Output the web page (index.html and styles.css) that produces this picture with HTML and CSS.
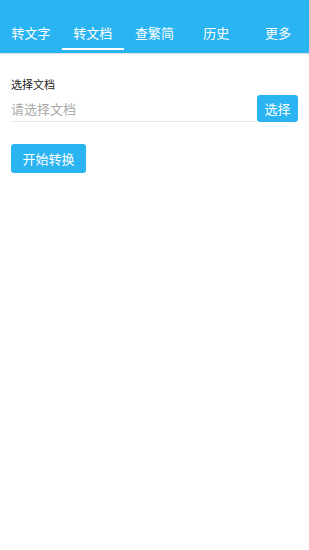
FILE: index.html
```html
<!DOCTYPE html>
<html lang="zh">
<head>
    <meta charset="UTF-8">
    <meta name="viewport" content="width=device-width, initial-scale=1.0">
    <title>转文档</title>
    <link rel="stylesheet" href="styles.css">
</head>
<body>
    <div class="tabs">
        <div class="tab">转文字</div>
        <div class="tab active">转文档</div>
        <div class="tab">查繁简</div>
        <div class="tab">历史</div>
        <div class="tab">更多</div>
    </div>
    <div class="content">
        <div class="label">选择文档</div>
        <div class="pick-row">
            <div class="input">请选择文档</div>
            <button class="pick-button">选择</button>
        </div>
        <button class="start-button">开始转换</button>
    </div>
</body>
</html>
```

FILE: styles.css
```css
body {
    margin: 0;
    background-color: white;
    font-family: "Noto Sans CJK SC", "Noto Sans", sans-serif;
}
.tabs {
    display: flex;
    height: 53px;
    background-color: #2ab4f2;
    box-shadow: 0 1px 1px rgba(0, 0, 0, 0.12);
}
.tab {
    flex: 1;
    display: flex;
    justify-content: center;
    align-items: center;
    padding-top: 16px;
    box-sizing: border-box;
    color: white;
    font-size: 13px;
    border-bottom: 2px solid transparent;
    margin: 0 0 3px;
}
.tab.active {
    border-bottom-color: white;
}
.content {
    padding: 23px 11px 0;
}
.label {
    font-size: 11px;
    color: #222;
    line-height: 16px;
}
.pick-row {
    display: flex;
    align-items: flex-end;
    margin-top: 2px;
}
.input {
    flex: 1;
    height: 27px;
    line-height: 29px;
    font-size: 13px;
    color: #aaa;
    border-bottom: 1px solid #e6e6e6;
    margin-right: 2px;
}
.pick-button {
    width: 41px;
    height: 27px;
    padding: 0;
    border: none;
    border-radius: 3px;
    background-color: #2ab4f2;
    color: white;
    font-family: inherit;
    font-size: 13px;
}
.start-button {
    display: block;
    margin-top: 22px;
    width: 75px;
    height: 29px;
    padding: 0;
    border: none;
    border-radius: 3px;
    background-color: #2ab4f2;
    color: white;
    font-family: inherit;
    font-size: 13px;
}
```
